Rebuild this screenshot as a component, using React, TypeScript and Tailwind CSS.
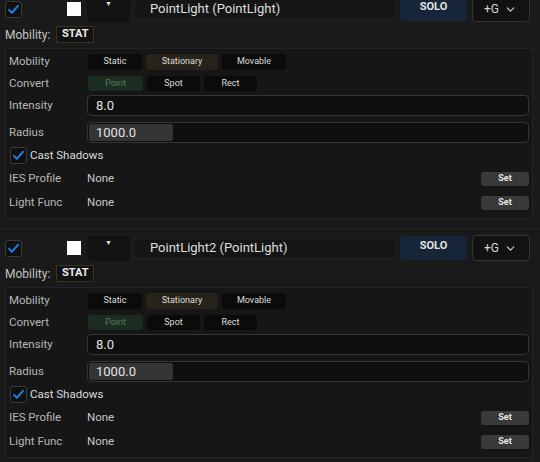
import { ChevronDown } from 'lucide-react';

type LightProps = {
  name: string;
};

function CheckBox() {
  return (
    <div className="w-[17px] h-[17px] rounded-[3px] border border-[#3a3a3a] bg-[#101010] flex items-center justify-center">
      <svg width="13" height="13" viewBox="0 0 16 16" fill="none">
        <path d="M2.5 8.5l3.5 3.5 7.5-8.5" stroke="#1f7de6" strokeWidth={2.4} strokeLinecap="round" strokeLinejoin="round" />
      </svg>
    </div>
  );
}

function Chip({ label, tone = 'dark', w }: { label: string; tone?: 'dark' | 'olive' | 'green'; w: string }) {
  const tones = {
    dark: 'bg-[#0b0b0b] text-[#dcdcdc]',
    olive: 'bg-[#27231a] text-[#dcdcdc]',
    green: 'bg-[#1b2d20] text-[#567a5f]',
  };
  return (
    <div className={`${w} h-full rounded-[3px] flex items-center justify-center text-[9px] ${tones[tone]}`}>
      {label}
    </div>
  );
}

function SetButton() {
  return (
    <div className="w-[48px] h-[14px] rounded-[3px] bg-[#3a3a3a] text-[#e6e6e6] text-[9px] font-bold flex items-center justify-center">
      Set
    </div>
  );
}

function LightSection({ name }: LightProps) {
  return (
    <section className="pt-[5px] pb-[10px] pl-[5px] pr-[7px] border-b border-[#242424]">
      {/* header: enable, color, dropdown, name, solo, group */}
      <div className="flex items-center h-[26px]">
        <CheckBox />
        <div className="w-[14px] h-[14px] bg-white ml-[45px]" />
        <div className="w-[43px] h-[25px] ml-[6px] rounded-[3px] bg-[#121212] flex justify-center pt-[4px]">
          <span className="text-[7px] leading-none text-[#e0e0e0]">▼</span>
        </div>
        <div className="w-[262px] h-[21px] ml-[4px] rounded-[4px] bg-[#151515] border border-[#202020] flex items-center pl-[15px] text-[13px] text-[#dedede]">
          {name}
        </div>
        <div className="w-[67px] h-[24px] ml-[4px] rounded-[3px] bg-[#162537] flex justify-center pt-[3px] text-[11px] font-bold text-[#e2e2e2] leading-[14px]">
          SOLO
        </div>
        <div className="w-[58px] h-[26px] ml-[5px] rounded-[4px] bg-[#121212] border border-[#363636] flex items-center pl-[11px] gap-[5px] text-[12px] text-[#d4d4d4]">
          +G
          <ChevronDown size={13} strokeWidth={2} className="text-[#cfcfcf]" />
        </div>
      </div>

      {/* mobility summary */}
      <div className="flex items-center h-[17px] mt-[4px]">
        <span className="text-[12px] text-[#c4c4c4]">Mobility:</span>
        <div className="ml-[6px] h-[17px] w-[38px] border border-[#39341f] bg-[#121212] flex items-center justify-center text-[11px] font-bold text-[#ececec]">
          STAT
        </div>
      </div>

      {/* properties panel */}
      <div className="mt-[5px] h-[171px] border border-[#242424] bg-[#161616] pl-[3px] pr-[3px] text-[11.5px] text-[#b6b6b6]">
        <div className="flex items-center h-[16px] mt-[5px]">
          <span className="w-[79px]">Mobility</span>
          <div className="flex h-full gap-[4px]">
            <Chip label="Static" w="w-[54px]" />
            <Chip label="Stationary" tone="olive" w="w-[72px]" />
            <Chip label="Movable" w="w-[64px]" />
          </div>
        </div>
        <div className="flex items-center h-[15px] mt-[6px]">
          <span className="w-[79px]">Convert</span>
          <div className="flex h-full gap-[4px]">
            <Chip label="Point" tone="green" w="w-[55px]" />
            <Chip label="Spot" w="w-[53px]" />
            <Chip label="Rect" w="w-[53px]" />
          </div>
        </div>
        <div className="flex items-center h-[21px] mt-[4px]">
          <span className="w-[78px]">Intensity</span>
          <div className="flex-1 h-full rounded-[4px] border border-[#353535] bg-[#0f0f0f] flex items-center pl-[8px] text-[13px] text-[#e2e2e2]">
            8.0
          </div>
        </div>
        <div className="flex items-center h-[21px] mt-[6px]">
          <span className="w-[78px]">Radius</span>
          <div className="flex-1 h-full rounded-[4px] border border-[#353535] bg-[#0f0f0f] p-px">
            <div className="w-[84px] h-full rounded-[3px] bg-[#353535] flex items-center pl-[7px] text-[13px] text-[#e2e2e2]">
              1000.0
            </div>
          </div>
        </div>
        <div className="flex items-center h-[17px] mt-[4px] ml-px gap-[3px]">
          <CheckBox />
          <span className="text-[#dcdcdc]">Cast Shadows</span>
        </div>
        <div className="flex items-center h-[22px] mt-[4px]">
          <span className="w-[78px]">IES Profile</span>
          <span className="flex-1 text-[#c6c6c6]">None</span>
          <SetButton />
        </div>
        <div className="flex items-center h-[22px] mt-[2px]">
          <span className="w-[78px]">Light Func</span>
          <span className="flex-1 text-[#c6c6c6]">None</span>
          <SetButton />
        </div>
      </div>
    </section>
  );
}

export default function App() {
  return (
    <div className="w-[540px] h-[462px] overflow-hidden bg-[#1a1a1a] font-['Roboto',sans-serif]">
      <div className="-mt-[9px]">
        <LightSection name="PointLight (PointLight)" />
        <LightSection name="PointLight2 (PointLight)" />
      </div>
    </div>
  );
}
